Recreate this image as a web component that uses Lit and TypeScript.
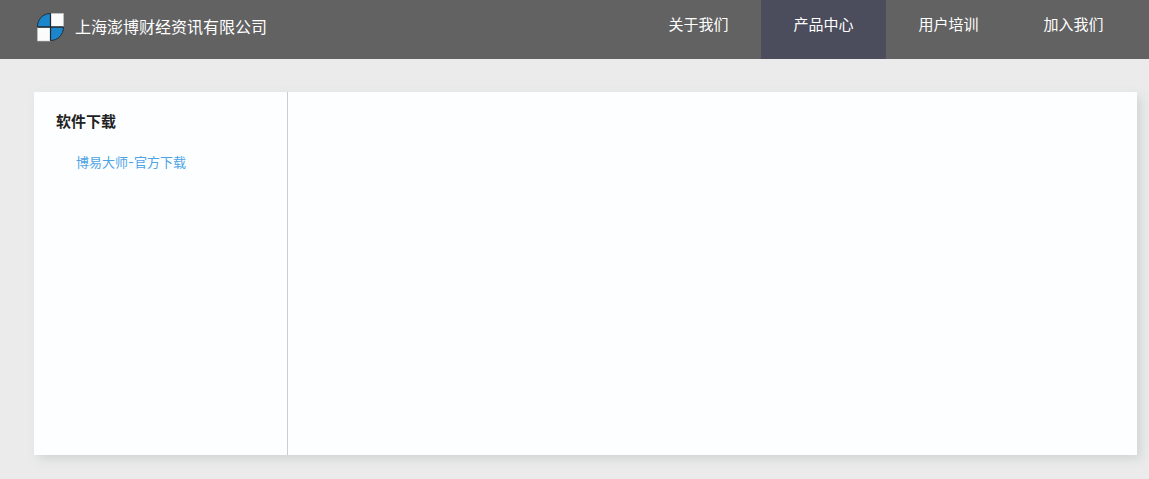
import { LitElement, html, css } from "lit";
import { customElement, property, state } from "lit/decorators.js";
import { classMap } from "lit/directives/class-map.js";

@customElement("site-header")
class SiteHeader extends LitElement {
  @property() company = "";
  @state() private active = "产品中心";
  private items = ["关于我们", "产品中心", "用户培训", "加入我们"];

  static styles = css`
    :host {
      display: block;
      background: #626262;
    }
    .bar {
      display: flex;
      justify-content: space-between;
      height: 59px;
      padding: 0 13px 0 36px;
    }
    .brand {
      display: flex;
      align-items: flex-start;
      gap: 10px;
      padding-top: 12px;
      color: #fff;
      font-size: 16px;
      line-height: 28px;
      text-decoration: none;
      white-space: nowrap;
    }
    .logo {
      display: block;
      width: 29px;
      height: 30px;
    }
    .nav {
      display: flex;
    }
    .item {
      box-sizing: border-box;
      width: 125px;
      height: 59px;
      color: #fff;
      font-size: 15px;
      line-height: 48px;
      text-align: center;
      text-decoration: none;
      white-space: nowrap;
    }
    .item.active {
      background: #4c4d5c;
    }
  `;

  render() {
    return html`
      <header class="bar">
        <a class="brand" href="#">
          <svg class="logo" viewBox="0 0 29 30" aria-hidden="true">
            <path d="M14.5 1.5H27.5V15H14.5Z" fill="#fbfbfb" stroke="#c9c9c9" stroke-width=".6" />
            <path d="M1.5 15.5H14.5V29H1.5Z" fill="#fbfbfb" stroke="#c9c9c9" stroke-width=".6" />
            <path d="M14.5 1.5V15H1.5C1.5 7 7 1.5 14.5 1.5Z" fill="#1c86cc" stroke="#20303c" />
            <path d="M14.5 15H27.5C27.5 22.5 22 28.5 14.5 28.5Z" fill="#1c86cc" stroke="#20303c" />
            <path d="M1.5 15H27.5M14.5 1.5V28.5" stroke="#20262b" stroke-width="1.2" />
          </svg>
          <span>${this.company}</span>
        </a>
        <nav class="nav">
          ${this.items.map(
            (item) => html`<a
              class=${classMap({ item: true, active: item === this.active })}
              href="#"
              @click=${(e: Event) => {
                e.preventDefault();
                this.active = item;
              }}
              >${item}</a
            >`
          )}
        </nav>
      </header>
    `;
  }
}

@customElement("app-root")
class AppRoot extends LitElement {
  static styles = css`
    :host {
      display: flex;
      flex-direction: column;
      min-height: 100vh;
      background: #ebebeb;
      font-family: "Noto Sans CJK SC", sans-serif;
    }
    .panel {
      display: flex;
      flex: 1;
      margin: 33px 12px 24px 34px;
      background: #fdfeff;
      box-shadow: 4px 4px 10px #d2d5d5;
    }
    .side {
      box-sizing: border-box;
      width: 254px;
      padding: 17px 22px;
      border-right: 1px solid #cccdd0;
    }
    .title {
      margin: 0;
      color: #222;
      font-size: 15px;
      font-weight: 700;
      line-height: 24px;
    }
    .links {
      margin: 16px 0 0;
      padding: 0 0 0 20px;
      list-style: none;
      font-family: Inter, "Noto Sans CJK SC", sans-serif;
      font-size: 13px;
      line-height: 26px;
    }
    .link {
      color: #4da3e6;
      text-decoration: none;
    }
    .content {
      flex: 1;
    }
  `;

  render() {
    return html`
      <site-header company="上海澎博财经资讯有限公司"></site-header>
      <main class="panel">
        <aside class="side">
          <h2 class="title">软件下载</h2>
          <ul class="links">
            <li><a class="link" href="#">博易大师-官方下载</a></li>
          </ul>
        </aside>
        <section class="content"></section>
      </main>
    `;
  }
}
